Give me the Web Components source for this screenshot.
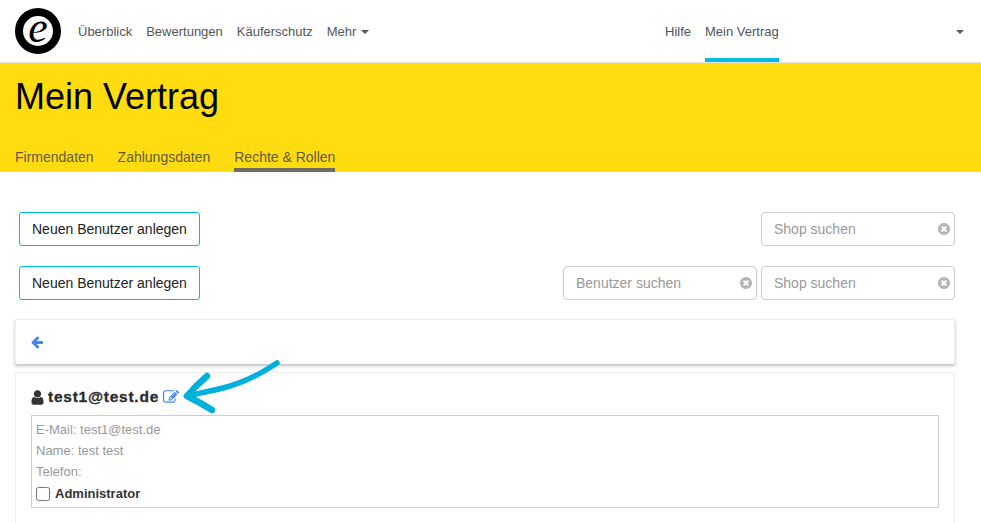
<!DOCTYPE html>
<html lang="de">
<head>
<meta charset="utf-8">
<title>Mein Vertrag</title>
<style>
  html, body { margin: 0; height: 523px; overflow: hidden; background: #fff; }
  body { font-family: "Liberation Sans", Arial, sans-serif; font-size: 14px; color: #333; }
</style>
</head>
<body>
<template id="nav-link-tpl">
  <style>
    :host { display: flex; align-items: center; height: 62px; box-sizing: border-box; color: #555; font-size: 13px; }
    :host([active]) { box-shadow: inset 0 -4px 0 #00bcdf; }
    .caret { display: none; width: 0; height: 0; margin-left: 5px; margin-top: 1px; border: 4px solid transparent; border-top-color: #555; border-bottom: 0; }
    :host([caret]) .caret { display: block; }
  </style>
  <slot></slot><span class="caret"></span>
</template>

<template id="navbar-tpl">
  <style>
    :host { display: flex; align-items: center; height: 62px; padding-left: 15px; padding-right: 17px; border-bottom: 1px solid #e4e4e4; }
    .logo { display: flex; align-items: center; justify-content: center; width: 30px; height: 30px; margin-right: 17px; flex: none; border: 8px solid #000; border-radius: 50%; font: italic 44px/30px "Liberation Serif", serif; color: #000; }
    .logo span { margin-top: -6px; }
    .left, .right { display: flex; gap: 14px; }
    .left { flex: none; width: 587px; }
    .right { flex: 1; }
    .end { width: 0; height: 0; border: 4px solid transparent; border-top-color: #555; border-bottom: 0; margin-top: 1px; }
  </style>
  <div class="logo"><span>e</span></div>
  <div class="left"><slot name="left"></slot></div>
  <div class="right"><slot name="right"></slot></div>
  <span class="end"></span>
</template>

<template id="header-tpl">
  <style>
    :host { display: block; height: 109px; box-sizing: border-box; background: #ffdc0f; padding: 0 15px; }
    h1 { margin: 0; padding-top: 13px; height: 79px; box-sizing: border-box; font-size: 36px; line-height: 42px; font-weight: 400; color: #000; }
    .tabs { display: flex; gap: 24px; }
  </style>
  <h1><slot name="title"></slot></h1>
  <div class="tabs"><slot></slot></div>
</template>

<template id="tab-tpl">
  <style>
    :host { display: block; height: 30px; box-sizing: border-box; padding-top: 7px; font-size: 14px; line-height: 16px; color: #5f5b45; }
    :host([active]) { box-shadow: inset 0 -4px 0 #6f6c62; }
  </style>
  <slot></slot>
</template>

<template id="button-tpl">
  <style>
    :host { display: inline-flex; align-items: center; height: 34px; box-sizing: border-box; padding: 0 12px; border: 1px solid #00bcdf; border-radius: 3px; background: #fff; color: #222; font-size: 14px; }
  </style>
  <slot></slot>
</template>

<template id="search-tpl">
  <style>
    :host { display: flex; align-items: center; justify-content: space-between; width: 194px; height: 34px; box-sizing: border-box; padding: 0 3px 0 12px; border: 1px solid #ccc; border-radius: 4px; background: #fff; color: #999; font-size: 14px; }
    svg { width: 14px; height: 14px; fill: #b4b4b4; }
  </style>
  <slot></slot>
  <svg viewBox="0 0 1792 1792"><path d="M1277 1122q0-26-19-45l-181-181 181-181q19-19 19-45 0-27-19-46l-90-90q-19-19-46-19-26 0-45 19l-181 181-181-181q-19-19-45-19-27 0-46 19l-90 90q-19 19-19 46 0 26 19 45l181 181-181 181q-19 19-19 45 0 27 19 46l90 90q19 19 46 19 26 0 45-19l181-181 181 181q19 19 45 19 27 0 46-19l90-90q19-19 19-46zm387-226q0 209-103 385.5t-279.5 279.5-385.5 103-385.5-103-279.5-279.5-103-385.5 103-385.5 279.5-279.5 385.5-103 385.5 103 279.5 279.5 103 385.5z"/></svg>
</template>

<template id="toolbar-tpl">
  <style>
    :host { display: flex; justify-content: space-between; align-items: center; padding: 0 26px 0 19px; }
    .end { display: flex; gap: 4px; }
  </style>
  <slot name="start"></slot>
  <div class="end"><slot name="end"></slot></div>
</template>

<template id="back-card-tpl">
  <style>
    :host { display: flex; align-items: center; height: 45px; box-sizing: border-box; margin: 0 26px 0 15px; padding-left: 14px; background: #fff; border: 1px solid #eee; border-bottom: 0; box-shadow: 0 2px 3px rgba(0,0,0,.25); }
    svg { width: 14px; height: 14px; fill: #4285f4; margin-top: -1px; }
  </style>
  <svg viewBox="0 0 1792 1792"><path d="M1664 896v128q0 53-32.5 90.5t-84.5 37.5h-704l293 294q38 36 38 90t-38 90l-75 76q-37 37-90 37-52 0-91-37l-651-652q-37-37-37-90 0-52 37-91l651-650q38-38 91-38 52 0 90 38l75 74q38 38 38 91t-38 91l-293 293h704q52 0 84.5 37.5t32.5 90.5z"/></svg>
</template>

<template id="user-card-tpl">
  <style>
    :host { display: block; position: relative; height: 160px; box-sizing: border-box; margin: 0 26px 0 15px; padding: 12px 15px 0; background: #fff; border: 1px solid #eee; border-bottom: 0; }
    .head { display: flex; align-items: center; height: 24px; margin-bottom: 6px; color: #2b2b2b; font-size: 15.5px; font-weight: 700; letter-spacing: .75px; -webkit-text-stroke: .3px #2b2b2b; }
    .head svg { flex: none; }
    .user { width: 17px; height: 17px; fill: #333; margin-left: -2px; margin-right: 2px; }
    .edit { width: 16px; height: 16px; fill: #4285f4; margin-left: 4px; }
    .box { height: 93px; box-sizing: border-box; padding: 3px 4px 0; border: 1px solid #ccc; color: #999; font-size: 13px; line-height: 21px; }
    .check { display: flex; align-items: center; margin-top: 1px; color: #333; font-weight: 700; }
    .check i { width: 12px; height: 12px; border: 1px solid #767676; border-radius: 2.5px; margin-right: 5px; }
    .arrow { position: absolute; left: 166px; top: -14px; width: 100px; height: 56px; overflow: visible; fill: none; stroke: #00b0dc; stroke-linecap: round; stroke-linejoin: round; }
    .shaft { stroke-width: 5.5; }
    .barb { stroke-width: 6.5; }
  </style>
  <div class="head">
    <svg class="user" viewBox="0 0 1792 1792"><path d="M1536 1399q0 109-62.5 187t-150.5 78h-854q-88 0-150.5-78t-62.5-187q0-85 8.5-160.5t31.5-152 58.5-131 94-89 134.5-34.5q131 128 313 128t313-128q76 0 134.5 34.5t94 89 58.5 131 31.5 152 8.5 160.5zm-256-887q0 159-112.5 271.5t-271.5 112.5-271.5-112.5-112.5-271.5 112.5-271.5 271.5-112.5 271.5 112.5 112.5 271.5z"/></svg>
    <slot name="name"></slot>
    <svg class="edit" viewBox="0 0 1792 1792"><path d="M888 1184l116-116-152-152-116 116v56h96v96h56zm440-720q-16-16-33 1l-350 350q-17 17-1 33t33-1l350-350q17-17 1-33zm80 594v190q0 119-84.5 203.5t-203.5 84.5h-832q-119 0-203.5-84.5t-84.5-203.5v-832q0-119 84.5-203.5t203.5-84.5h832q63 0 117 25 15 7 18 23 3 17-9 29l-49 49q-14 14-32 8-23-6-45-6h-832q-66 0-113 47t-47 113v832q0 66 47 113t113 47h832q66 0 113-47t47-113v-126q0-13 9-22l64-64q15-15 35-7t20 29zm-96-738l288 288-672 672h-288v-288zm444 132l-92 92-288-288 92-92q28-28 68-28t68 28l152 152q28 28 28 68t-28 68z"/></svg>
  </div>
  <div class="box">
    <slot></slot>
    <div class="check"><i></i><slot name="role"></slot></div>
  </div>
  <!-- hand drawn annotation on top of the card -->
  <svg class="arrow" viewBox="0 0 100 56">
    <path class="shaft" d="M95 4 C80 14 62 23 48 27 C35 31 18 34 5 37"/>
    <path class="barb" d="M25 17 C18 23 11 30 5 37 C13 41 22 46 30 51"/>
  </svg>
</template>

<ts-navbar>
  <ts-nav-link slot="left">Überblick</ts-nav-link>
  <ts-nav-link slot="left">Bewertungen</ts-nav-link>
  <ts-nav-link slot="left">Käuferschutz</ts-nav-link>
  <ts-nav-link slot="left" caret>Mehr</ts-nav-link>
  <ts-nav-link slot="right">Hilfe</ts-nav-link>
  <ts-nav-link slot="right" active>Mein Vertrag</ts-nav-link>
</ts-navbar>
<ts-header>
  <span slot="title">Mein Vertrag</span>
  <ts-tab>Firmendaten</ts-tab>
  <ts-tab>Zahlungsdaten</ts-tab>
  <ts-tab active>Rechte &amp; Rollen</ts-tab>
</ts-header>
<ts-toolbar style="margin-top:40px">
  <ts-button slot="start">Neuen Benutzer anlegen</ts-button>
  <ts-search slot="end">Shop suchen</ts-search>
</ts-toolbar>
<ts-toolbar style="margin-top:20px">
  <ts-button slot="start">Neuen Benutzer anlegen</ts-button>
  <ts-search slot="end">Benutzer suchen</ts-search>
  <ts-search slot="end">Shop suchen</ts-search>
</ts-toolbar>
<ts-back-card style="margin-top:19px"></ts-back-card>
<ts-user-card style="margin-top:8px">
  <span slot="name">test1@test.de</span>
  <div>E-Mail: test1@test.de</div>
  <div>Name: test test</div>
  <div>Telefon:</div>
  <span slot="role">Administrator</span>
</ts-user-card>
<script>
  function define(tag, tplId) {
    customElements.define(tag, class extends HTMLElement {
      connectedCallback() {
        if (this.shadowRoot) return;
        const root = this.attachShadow({mode: 'open'});
        root.appendChild(document.getElementById(tplId).content.cloneNode(true));
      }
    });
  }
  define('ts-nav-link', 'nav-link-tpl');
  define('ts-navbar', 'navbar-tpl');
  define('ts-header', 'header-tpl');
  define('ts-tab', 'tab-tpl');
  define('ts-button', 'button-tpl');
  define('ts-search', 'search-tpl');
  define('ts-toolbar', 'toolbar-tpl');
  define('ts-back-card', 'back-card-tpl');
  define('ts-user-card', 'user-card-tpl');
</script>
</body>
</html>
